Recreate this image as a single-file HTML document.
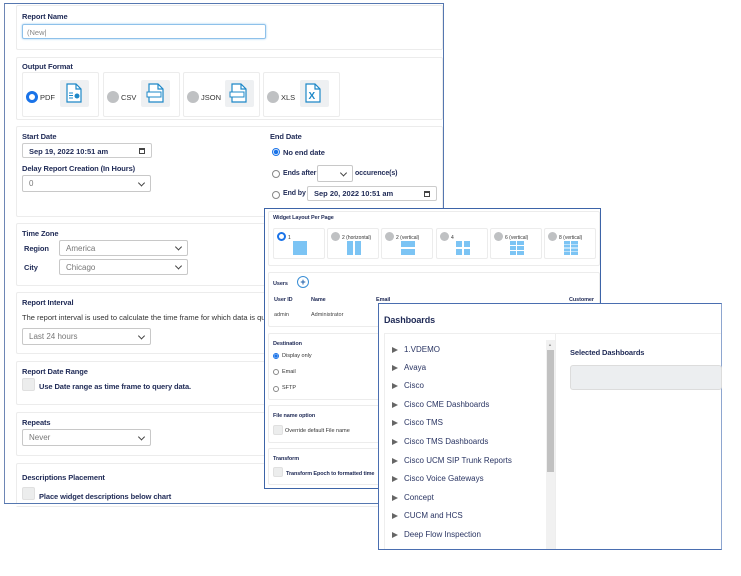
<!DOCTYPE html>
<html><head><meta charset="utf-8"><style>
*{box-sizing:border-box;margin:0;padding:0}
body{width:741px;height:576px;background:#fff;position:relative;overflow:hidden;font-family:"Liberation Sans",sans-serif;color:#1f2a56}
.a{position:absolute}
.card{position:absolute;border:1px solid #ececec;background:#fff;border-radius:2px}
.lbl{position:absolute;font-size:7.5px;font-weight:bold;color:#1f2a56;white-space:nowrap;letter-spacing:-0.1px}
.sel{position:absolute;border:1px solid #c8c8c8;border-radius:2px;background:#fff;font-size:8px;color:#777;padding-left:6px;display:flex;align-items:center}
.sel:after{content:"";position:absolute;right:6px;top:50%;width:4px;height:4px;border-right:1.3px solid #444;border-bottom:1.3px solid #444;transform:translateY(-70%) rotate(45deg)}
.chk{position:absolute;background:#eceded;border:1px solid #e0e0e0;border-radius:2px}
.gr{position:absolute;width:12px;height:12px;border-radius:50%;background:#bfc1c3}
.rad{position:absolute;width:8px;height:8px;border-radius:50%;border:1px solid #888;background:#fff}
.radon{position:absolute;width:8px;height:8px;border-radius:50%;border:1px solid #1a73e8;background:radial-gradient(circle,#1a73e8 2px,#fff 2.5px)}
.fmt{position:absolute;top:72px;height:45px;border:1px solid #ececec;border-radius:2px}
.ico{position:absolute;width:29px;height:27px;background:#eef0f2;border-radius:2px}
.lo{position:absolute;top:228px;width:52px;height:31px;border:1px solid #ececec;border-radius:2px;font-size:5px;color:#333}
.sq{position:absolute;background:#7cc4f4}
.it{position:absolute;left:392px;font-size:8px;color:#2a3563;white-space:nowrap}
.it:before{content:"";display:inline-block;width:0;height:0;border-left:6px solid #666;border-top:3.5px solid transparent;border-bottom:3.5px solid transparent;margin-right:6px;vertical-align:-1px}
.cal{position:absolute;right:6px;top:4px;width:6px;height:6px;border:1px solid #444;border-top-width:2px}
</style></head><body>

<!-- main panel -->
<div class="a" style="left:4px;top:3px;width:440px;height:502px;border:1px solid #5577b0;border-left-color:#6e86b5"></div>

<div class="card" style="left:16px;top:5px;width:427px;height:45px"></div>
<div class="lbl" style="left:22px;top:12px">Report Name</div>
<div class="a" style="left:22px;top:24px;width:244px;height:15px;border:1px solid #8ec1ea;border-radius:2px;box-shadow:0 0 2px #9ccbf0;font-size:7.5px;color:#888;padding:3px 4px">(New|</div>

<div class="card" style="left:16px;top:57px;width:427px;height:63px"></div>
<div class="lbl" style="left:22px;top:62px">Output Format</div>
<div class="fmt" style="left:22px;width:77px"></div>
<div class="a" style="left:26px;top:91px;width:12px;height:12px;border-radius:50%;border:3px solid #1a73e8;background:#fff"></div>
<div class="a" style="left:40px;top:93px;font-size:7.5px;color:#333">PDF</div>
<div class="ico" style="left:60px;top:80px"></div>
<svg class="a" style="left:66px;top:83px" width="16" height="20" viewBox="0 0 16 20"><path d="M1 1h9l5 5v13H1z" fill="#fff" stroke="#1e88c8" stroke-width="1.2"/><path d="M10 1v5h5" fill="none" stroke="#1e88c8" stroke-width="1.2"/><path d="M3 10h4M3 12.5h4M3 15h4" stroke="#1e88c8"/><circle cx="11" cy="13" r="2.5" fill="#1e88c8"/></svg>
<div class="fmt" style="left:103px;width:77px"></div>
<div class="gr" style="left:107px;top:91px"></div>
<div class="a" style="left:121px;top:93px;font-size:7.5px;color:#333">CSV</div>
<div class="ico" style="left:141px;top:80px"></div>
<svg class="a" style="left:146px;top:83px" width="18" height="20" viewBox="0 0 18 20"><path d="M3 1h9l5 5v13H3z" fill="#fff" stroke="#1e88c8" stroke-width="1.2"/><path d="M12 1v5h5" fill="none" stroke="#1e88c8" stroke-width="1.2"/><rect x="1" y="9" width="14" height="5" fill="#fff" stroke="#1e88c8"/></svg>
<div class="fmt" style="left:183px;width:77px"></div>
<div class="gr" style="left:187px;top:91px"></div>
<div class="a" style="left:201px;top:93px;font-size:7.5px;color:#333">JSON</div>
<div class="ico" style="left:225px;top:80px"></div>
<svg class="a" style="left:229px;top:83px" width="18" height="20" viewBox="0 0 18 20"><path d="M3 1h9l5 5v13H3z" fill="#fff" stroke="#1e88c8" stroke-width="1.2"/><path d="M12 1v5h5" fill="none" stroke="#1e88c8" stroke-width="1.2"/><rect x="1" y="9" width="14" height="5" fill="#fff" stroke="#1e88c8"/></svg>
<div class="fmt" style="left:263px;width:77px"></div>
<div class="gr" style="left:267px;top:91px"></div>
<div class="a" style="left:281px;top:93px;font-size:7.5px;color:#333">XLS</div>
<div class="ico" style="left:300px;top:80px"></div>
<svg class="a" style="left:305px;top:83px" width="16" height="20" viewBox="0 0 16 20"><path d="M1 1h9l5 5v13H1z" fill="#fff" stroke="#1e88c8" stroke-width="1.2"/><path d="M10 1v5h5" fill="none" stroke="#1e88c8" stroke-width="1.2"/><text x="3.5" y="16" font-size="10" font-weight="bold" fill="#1e88c8" font-family="Liberation Sans">X</text></svg>

<div class="card" style="left:16px;top:126px;width:427px;height:91px"></div>
<div class="lbl" style="left:22px;top:132px">Start Date</div>
<div class="a" style="left:22px;top:143px;width:130px;height:15px;border:1px solid #ccc;border-radius:2px;font-size:7.5px;font-weight:bold;padding:3px 6px">Sep 19, 2022 10:51 am<span class="cal"></span></div>
<div class="lbl" style="left:22px;top:164px">Delay Report Creation (In Hours)</div>
<div class="sel" style="left:22px;top:175px;width:129px;height:17px">0</div>
<div class="lbl" style="left:270px;top:132px">End Date</div>
<div class="radon" style="left:272px;top:148px"></div>
<div class="lbl" style="left:283px;top:148px">No end date</div>
<div class="rad" style="left:272px;top:170px"></div>
<div class="lbl" style="left:283px;top:170px;font-size:7px">Ends after</div>
<div class="sel" style="left:317px;top:165px;width:36px;height:17px"></div>
<div class="lbl" style="left:355px;top:170px;font-size:7px">occurence(s)</div>
<div class="rad" style="left:272px;top:191px"></div>
<div class="lbl" style="left:283px;top:190px;font-size:7px">End by</div>
<div class="a" style="left:307px;top:186px;width:130px;height:15px;border:1px solid #ccc;border-radius:2px;font-size:7.5px;font-weight:bold;padding:2px 6px">Sep 20, 2022 10:51 am<span class="cal"></span></div>

<div class="card" style="left:16px;top:223px;width:427px;height:63px"></div>
<div class="lbl" style="left:22px;top:229px">Time Zone</div>
<div class="lbl" style="left:24px;top:244px">Region</div>
<div class="sel" style="left:59px;top:240px;width:129px;height:16px">America</div>
<div class="lbl" style="left:24px;top:263px">City</div>
<div class="sel" style="left:59px;top:259px;width:129px;height:16px">Chicago</div>

<div class="card" style="left:16px;top:292px;width:427px;height:62px"></div>
<div class="lbl" style="left:22px;top:298px">Report Interval</div>
<div class="a" style="left:22px;top:313px;font-size:7.5px;color:#333;white-space:nowrap">The report interval is used to calculate the time frame for which data is queried</div>
<div class="sel" style="left:22px;top:328px;width:129px;height:17px">Last 24 hours</div>

<div class="card" style="left:16px;top:361px;width:427px;height:44px"></div>
<div class="lbl" style="left:22px;top:367px">Report Date Range</div>
<div class="chk" style="left:22px;top:378px;width:13px;height:13px"></div>
<div class="lbl" style="left:39px;top:382px">Use Date range as time frame to query data.</div>

<div class="card" style="left:16px;top:412px;width:427px;height:44px"></div>
<div class="lbl" style="left:22px;top:418px">Repeats</div>
<div class="sel" style="left:22px;top:429px;width:129px;height:17px">Never</div>

<div class="card" style="left:16px;top:463px;width:427px;height:44px"></div>
<div class="lbl" style="left:22px;top:473px">Descriptions Placement</div>
<div class="chk" style="left:22px;top:487px;width:13px;height:13px"></div>
<div class="lbl" style="left:39px;top:492px">Place widget descriptions below chart</div>
<div class="a" style="left:4px;top:503px;width:440px;height:3px;border-top:1px solid #5577b0;background:#fff"></div>

<!-- widget panel -->
<div class="a" style="left:264px;top:208px;width:337px;height:281px;background:#fff;border:1px solid #3d64a8"></div>
<div class="card" style="left:268px;top:211px;width:332px;height:55px"></div>
<div class="lbl" style="left:273px;top:215px;font-size:5.5px">Widget Layout Per Page</div>
<div class="lo" style="left:273px"><div class="a" style="left:3px;top:3px;width:9px;height:9px;border-radius:50%;border:2.5px solid #1a73e8"></div><span class="a" style="left:14px;top:6px">1</span><div class="sq" style="left:19px;top:12px;width:14px;height:14px"></div></div>
<div class="lo" style="left:327px"><div class="gr" style="left:3px;top:3px;width:9px;height:9px"></div><span class="a" style="left:14px;top:6px">2 (horizontal)</span><div class="sq" style="left:19px;top:12px;width:6px;height:14px"></div><div class="sq" style="left:27px;top:12px;width:6px;height:14px"></div></div>
<div class="lo" style="left:381px"><div class="gr" style="left:3px;top:3px;width:9px;height:9px"></div><span class="a" style="left:14px;top:6px">2 (vertical)</span><div class="sq" style="left:19px;top:12px;width:14px;height:6px"></div><div class="sq" style="left:19px;top:20px;width:14px;height:6px"></div></div>
<div class="lo" style="left:436px"><div class="gr" style="left:3px;top:3px;width:9px;height:9px"></div><span class="a" style="left:14px;top:6px">4</span><div class="sq" style="left:19px;top:12px;width:6px;height:6px"></div><div class="sq" style="left:27px;top:12px;width:6px;height:6px"></div><div class="sq" style="left:19px;top:20px;width:6px;height:6px"></div><div class="sq" style="left:27px;top:20px;width:6px;height:6px"></div></div>
<div class="lo" style="left:490px"><div class="gr" style="left:3px;top:3px;width:9px;height:9px"></div><span class="a" style="left:14px;top:6px">6 (vertical)</span><div class="sq" style="left:19px;top:12px;width:14px;height:14px;background:repeating-linear-gradient(#7cc4f4 0 4px,#fff 4px 5px),#7cc4f4"></div><div class="a" style="left:25px;top:12px;width:1px;height:14px;background:#fff"></div></div>
<div class="lo" style="left:544px"><div class="gr" style="left:3px;top:3px;width:9px;height:9px"></div><span class="a" style="left:14px;top:6px">8 (vertical)</span><div class="sq" style="left:19px;top:12px;width:14px;height:14px;background:repeating-linear-gradient(#7cc4f4 0 3px,#fff 3px 3.7px)"></div><div class="a" style="left:25px;top:12px;width:1px;height:14px;background:#fff"></div></div>

<div class="card" style="left:268px;top:272px;width:332px;height:55px"></div>
<div class="lbl" style="left:273px;top:281px;font-size:5.5px">Users</div>
<div class="a" style="left:297px;top:276px;width:12px;height:12px;border-radius:50%;border:1px solid #3b8fd6;color:#1f5fa8;font-size:9px;line-height:10px;text-align:center;font-weight:bold">+</div>
<div class="lbl" style="left:274px;top:297px;font-size:5.5px">User ID</div>
<div class="lbl" style="left:311px;top:297px;font-size:5.5px">Name</div>
<div class="lbl" style="left:376px;top:297px;font-size:5.5px">Email</div>
<div class="lbl" style="left:569px;top:297px;font-size:5.5px">Customer</div>
<div class="a" style="left:274px;top:312px;font-size:5.5px;color:#444">admin</div>
<div class="a" style="left:311px;top:312px;font-size:5.5px;color:#444">Administrator</div>

<div class="card" style="left:268px;top:333px;width:332px;height:67px"></div>
<div class="lbl" style="left:273px;top:341px;font-size:5.5px">Destination</div>
<div class="radon" style="left:273px;top:353px;width:6px;height:6px;background:radial-gradient(circle,#1a73e8 1.5px,#fff 2px)"></div><div class="a" style="left:282px;top:353px;font-size:5.5px;color:#333">Display only</div>
<div class="rad" style="left:273px;top:369px;width:6px;height:6px"></div><div class="a" style="left:282px;top:369px;font-size:5.5px;color:#333">Email</div>
<div class="rad" style="left:273px;top:386px;width:6px;height:6px"></div><div class="a" style="left:282px;top:385px;font-size:5.5px;color:#333">SFTP</div>

<div class="card" style="left:268px;top:405px;width:332px;height:38px"></div>
<div class="lbl" style="left:273px;top:413px;font-size:5.5px">File name option</div>
<div class="chk" style="left:273px;top:425px;width:10px;height:10px"></div>
<div class="a" style="left:285px;top:428px;font-size:5.5px;color:#333">Override default File name</div>

<div class="card" style="left:268px;top:448px;width:332px;height:37px"></div>
<div class="lbl" style="left:273px;top:456px;font-size:5.5px">Transform</div>
<div class="chk" style="left:273px;top:467px;width:10px;height:10px"></div>
<div class="lbl" style="left:286px;top:471px;font-size:5.5px">Transform Epoch to formatted time</div>

<!-- dashboards panel -->
<div class="a" style="left:378px;top:303px;width:344px;height:247px;background:#fff;border:1px solid #4a6eb0;border-right-color:#8ea6d0"></div>
<div class="lbl" style="left:384px;top:315px;font-size:9px">Dashboards</div>
<div class="a" style="left:384px;top:333px;width:337px;height:216px;border-top:1px solid #eee;border-left:1px solid #eee"></div>
<div class="a" style="left:546px;top:340px;width:9px;height:209px;background:#f1f1f1"></div>
<div class="a" style="left:547px;top:350px;width:7px;height:122px;background:#c1c1c1"></div>
<div class="a" style="left:548px;top:342px;font-size:4px;color:#999">&#9650;</div>
<div class="a" style="left:555px;top:334px;width:1px;height:215px;background:#eee"></div>
<div class="lbl" style="left:570px;top:348px;font-size:7.5px">Selected Dashboards</div>
<div class="a" style="left:570px;top:365px;width:152px;height:25px;background:#eceef0;border:1px solid #dcdcdc;border-radius:3px"></div>
<div class="it" style="top:345px">1.VDEMO</div>
<div class="it" style="top:363px">Avaya</div>
<div class="it" style="top:381px">Cisco</div>
<div class="it" style="top:400px">Cisco CME Dashboards</div>
<div class="it" style="top:418px">Cisco TMS</div>
<div class="it" style="top:437px">Cisco TMS Dashboards</div>
<div class="it" style="top:456px">Cisco UCM SIP Trunk Reports</div>
<div class="it" style="top:474px">Cisco Voice Gateways</div>
<div class="it" style="top:493px">Concept</div>
<div class="it" style="top:511px">CUCM and HCS</div>
<div class="it" style="top:530px">Deep Flow Inspection</div>
</body></html>
